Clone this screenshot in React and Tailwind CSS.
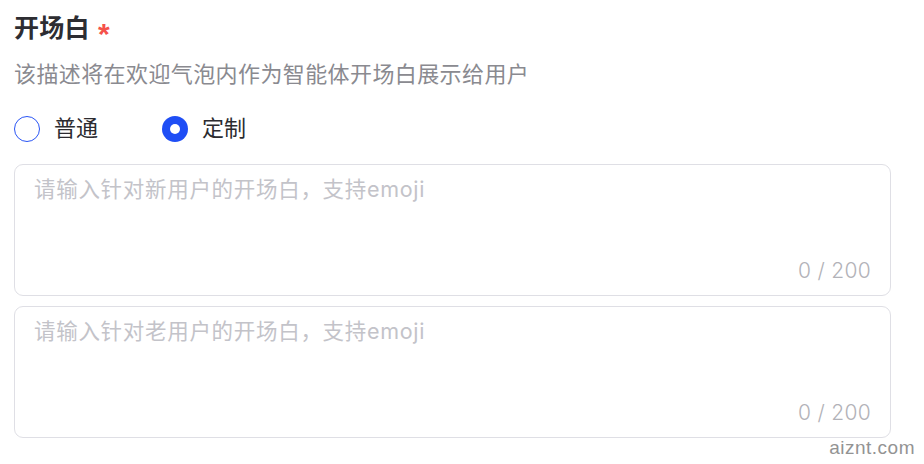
import React, { useState } from "react";

const font = { fontFamily: '"Liberation Sans", "Noto Sans CJK SC", sans-serif' };
const latin = { fontFamily: 'Inter, "Noto Sans CJK SC", sans-serif' };

const Radio = ({ checked, label, onClick }) => (
  <button type="button" onClick={onClick} className="flex items-center h-[30px]">
    {checked ? (
      <span className="w-[26px] h-[26px] rounded-full bg-[#1f4ef5] flex items-center justify-center">
        <span className="w-[10px] h-[10px] rounded-full bg-white" />
      </span>
    ) : (
      <span className="w-[26px] h-[26px] rounded-full border-[1.5px] border-[#2a55f5] bg-white" />
    )}
    <span className="ml-[14px] text-[22px] leading-[30px] text-[#2b2b30]">{label}</span>
  </button>
);

const Box = ({ placeholder }) => {
  const [val, setVal] = useState("");
  return (
    <div className="h-[132px] rounded-[9px] border border-[#dfdfe5] bg-white flex flex-col px-[19px] pt-[9px] pb-[9px]">
      <textarea
        value={val}
        maxLength={200}
        onChange={(e) => setVal(e.target.value)}
        placeholder={placeholder}
        className="flex-1 resize-none outline-none text-[21.5px] leading-[30px] tracking-[0.7px] text-[#2b2b30] placeholder:text-[#c3c3c9] bg-transparent"
        style={latin}
      />
      <div className="text-right text-[21px] leading-[30px] text-[#b2b2b8] font-light tracking-[0.3px]" style={latin}>
        {val.length} / 200
      </div>
    </div>
  );
};

export default function App() {
  const [mode, setMode] = useState("custom");

  return (
    <div className="relative w-[924px] h-[464px] bg-white overflow-hidden" style={font}>
      <div className="pl-[14px] pr-[33px] pt-[13px]">
        <div className="flex items-center h-8">
          <span className="text-[25px] font-semibold text-[#2d2d32] tracking-[0.3px]">开场白</span>
          <span className="ml-[8px] text-[30px] font-bold text-[#f5524a] leading-none pt-[10px]">*</span>
        </div>
        <p className="mt-[15px] text-[22px] leading-[30px] text-[#8a8a90] tracking-[0.4px]">
          该描述将在欢迎气泡内作为智能体开场白展示给用户
        </p>
        <div className="mt-[24px] flex items-center gap-[64px]">
          <Radio checked={mode === "normal"} label="普通" onClick={() => setMode("normal")} />
          <Radio checked={mode === "custom"} label="定制" onClick={() => setMode("custom")} />
        </div>
        <div className="mt-[20px] flex flex-col gap-[10px]">
          <Box placeholder="请输入针对新用户的开场白，支持emoji" />
          <Box placeholder="请输入针对老用户的开场白，支持emoji" />
        </div>
      </div>
      <div className="absolute right-[9px] bottom-[6px] text-[19px] leading-[20px] text-[#939393] tracking-[0.5px]">
        aiznt.com
      </div>
    </div>
  );
}
